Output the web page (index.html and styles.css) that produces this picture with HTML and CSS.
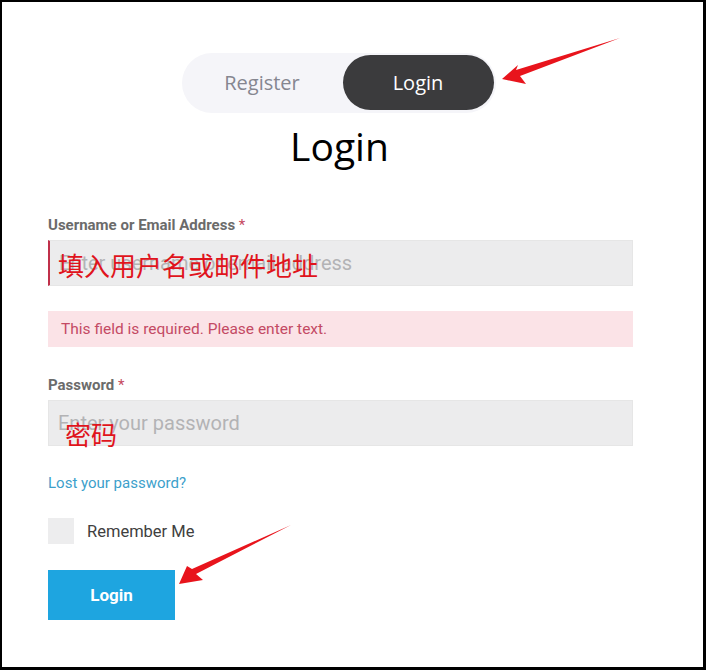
FILE: index.html
```html
<!DOCTYPE html>
<html lang="zh">
<head>
<meta charset="utf-8">
<title>Login</title>
<link rel="stylesheet" href="styles.css">
</head>
<body>
<div class="frame">
  <div class="toggle-wrap">
    <div class="toggle">
      <span class="tab">Register</span>
      <span class="tab active">Login</span>
    </div>
  </div>
  <h1 class="title">Login</h1>
  <form class="form">
    <label class="label">Username or Email Address <span class="req">*</span></label>
    <div class="field">
      <input class="input input-error" type="text" placeholder="Enter username or email address">
      <span class="note note-user">填入用户名或邮件地址</span>
    </div>
    <div class="error">This field is required. Please enter text.</div>
    <label class="label label-pw">Password <span class="req">*</span></label>
    <div class="field">
      <input class="input" type="password" placeholder="Enter your password">
      <span class="note note-pw">密码</span>
    </div>
    <a class="lost" href="#">Lost your password?</a>
    <div class="remember">
      <span class="box"></span>
      <span class="remember-text">Remember Me</span>
    </div>
    <button class="btn" type="button">Login</button>
  </form>
  <svg class="arrows" width="706" height="670" viewBox="0 0 706 670">
    <polygon points="502,79 518,65 516,70 620,38 520,76 526,84" fill="#e8141c"/>
    <polygon points="179,584 187,566 192,569 291,525 196,574 203,580" fill="#e8141c"/>
  </svg>
</div>
</body>
</html>
```

FILE: styles.css
```css
* { box-sizing: border-box; }
html, body { margin: 0; padding: 0; background: #fff; }
.frame {
  position: relative;
  width: 706px;
  height: 670px;
  border: 2px solid #000;
  border-right-width: 3px;
  border-bottom-width: 3px;
  font-family: Roboto, "Noto Sans CJK SC", sans-serif;
  overflow: hidden;
}
.toggle-wrap {
  display: flex;
  justify-content: center;
  padding-top: 51px;
}
.toggle {
  display: flex;
  align-items: center;
  width: 314px;
  height: 60px;
  border-radius: 30px;
  background: #f5f5f9;
  padding: 2px 0 3px 0;
  transform: translateX(-14px);
}
.tab {
  font-family: "Open Sans", sans-serif;
  font-size: 20px;
  color: #858690;
  height: 100%;
  display: flex;
  align-items: center;
  justify-content: center;
}
.tab:first-child { flex: 0 0 161px; }
.tab.active {
  flex: 0 0 151px;
  background: #3b3b3d;
  color: #fff;
  border-radius: 28px;
}
.title {
  margin: 9px 0 0 0;
  text-align: center;
  font-family: "Open Sans", sans-serif;
  font-weight: 400;
  font-size: 39px;
  line-height: 48px;
  color: #000;
  transform: translateX(-13px);
}
.form {
  display: flex;
  flex-direction: column;
  align-items: flex-start;
  padding: 46px 0 0 46px;
  width: 632px;
}
.label {
  font-size: 15px;
  font-weight: 700;
  color: #6b6b6b;
  line-height: 18px;
}
.req { color: #c5485e; font-weight: 400; }
.field {
  position: relative;
  width: 585px;
  margin-top: 6px;
}
.input {
  display: block;
  width: 100%;
  height: 46px;
  border: 1px solid #e6e6e6;
  background: #ececed;
  font-family: Roboto, sans-serif;
  font-size: 20px;
  padding: 0 9px;
  color: #333;
  outline: none;
}
.input::placeholder { color: #b3b3b5; }
.input-error { border-left: 2px solid #c0304a; }
.note {
  position: absolute;
  color: #e0141c;
  font-family: "Noto Sans CJK SC", sans-serif;
  font-size: 26px;
  line-height: 1;
  pointer-events: none;
}
.note-user { left: 10px; top: 12px; }
.note-pw { left: 17px; top: 21px; }
.error {
  width: 585px;
  height: 36px;
  margin-top: 25px;
  background: #fbe3e7;
  color: #c44a64;
  font-size: 15.5px;
  display: flex;
  align-items: center;
  padding-left: 13px;
}
.label-pw { margin-top: 29px; }
.lost {
  margin-top: 28px;
  color: #3d9fcb;
  font-size: 15px;
  text-decoration: none;
  line-height: 18px;
}
.remember {
  display: flex;
  align-items: center;
  margin-top: 26px;
}
.box {
  width: 26px;
  height: 26px;
  background: #ededee;
}
.remember-text {
  margin-left: 13px;
  font-size: 16.5px;
  color: #404040;
}
.btn {
  margin-top: 26px;
  width: 127px;
  height: 50px;
  border: none;
  background: #1ea5e0;
  color: #fff;
  font-family: Roboto, sans-serif;
  font-weight: 700;
  font-size: 17px;
  padding: 0;
}
.arrows {
  position: absolute;
  left: -2px;
  top: -2px;
  pointer-events: none;
}
```
